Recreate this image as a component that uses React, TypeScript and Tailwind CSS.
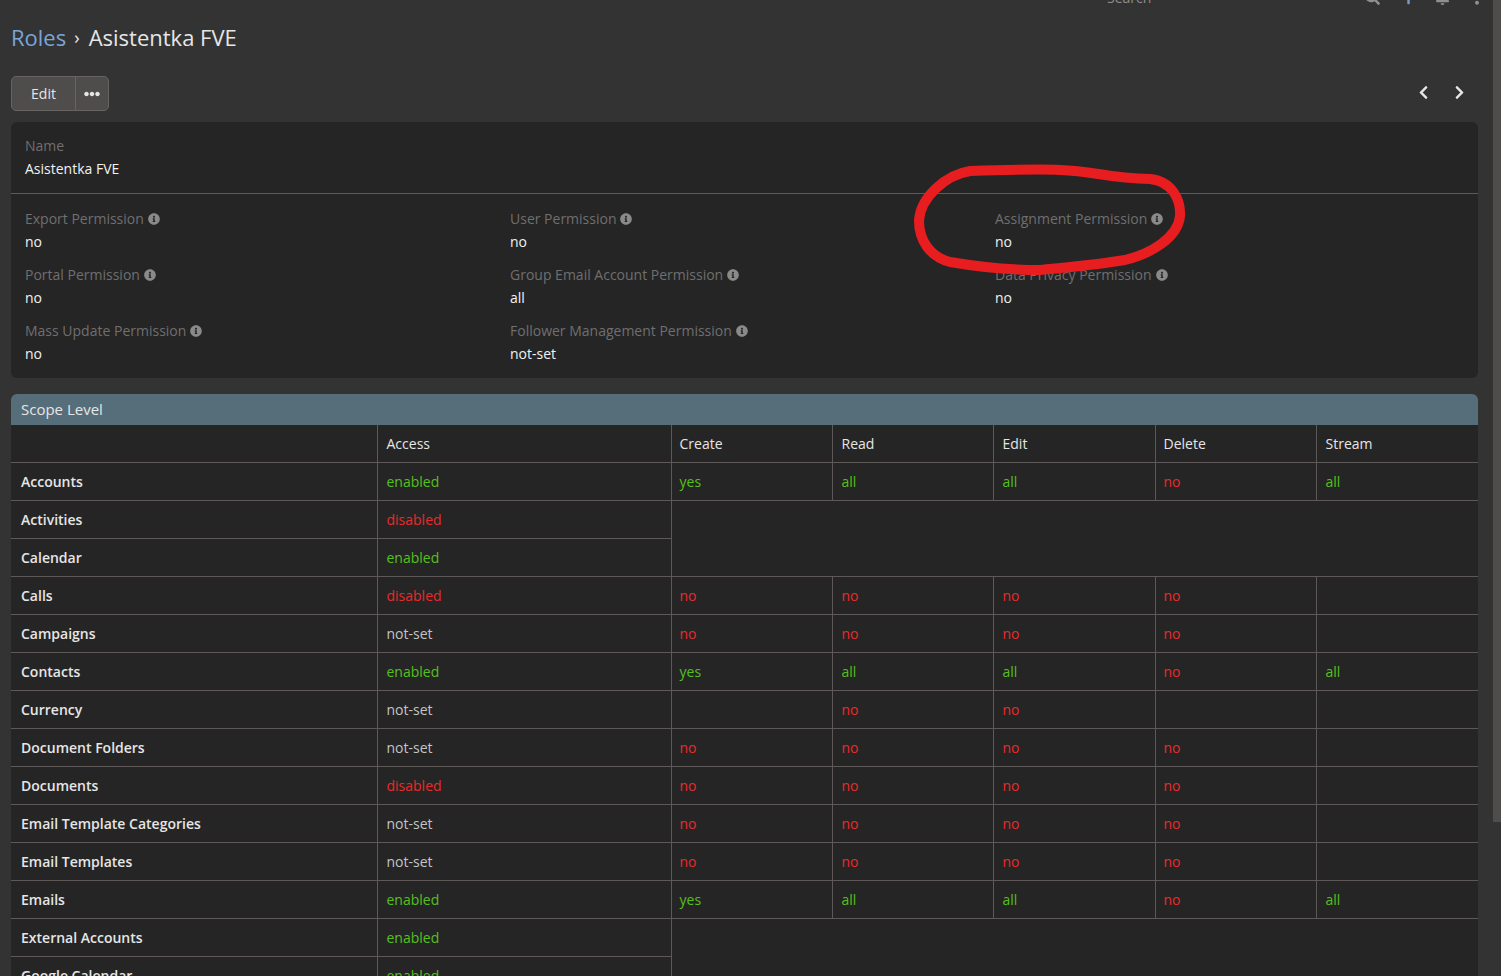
import React from "react";
import { FaInfoCircle, FaEllipsisH, FaChevronLeft, FaChevronRight, FaSearch, FaPlus, FaBell, FaEllipsisV } from "react-icons/fa";

type Cell = "" | "yes" | "no" | "all";

interface ScopeRow {
  name: string;
  access: "enabled" | "disabled" | "not-set";
  levels?: Cell[];
  merged?: number;
}

const scopes: ScopeRow[] = [
  { name: "Accounts", access: "enabled", levels: ["yes", "all", "all", "no", "all"] },
  { name: "Activities", access: "disabled", merged: 2 },
  { name: "Calendar", access: "enabled" },
  { name: "Calls", access: "disabled", levels: ["no", "no", "no", "no", ""] },
  { name: "Campaigns", access: "not-set", levels: ["no", "no", "no", "no", ""] },
  { name: "Contacts", access: "enabled", levels: ["yes", "all", "all", "no", "all"] },
  { name: "Currency", access: "not-set", levels: ["", "no", "no", "", ""] },
  { name: "Document Folders", access: "not-set", levels: ["no", "no", "no", "no", ""] },
  { name: "Documents", access: "disabled", levels: ["no", "no", "no", "no", ""] },
  { name: "Email Template Categories", access: "not-set", levels: ["no", "no", "no", "no", ""] },
  { name: "Email Templates", access: "not-set", levels: ["no", "no", "no", "no", ""] },
  { name: "Emails", access: "enabled", levels: ["yes", "all", "all", "no", "all"] },
  { name: "External Accounts", access: "enabled", merged: 2 },
  { name: "Google Calendar", access: "enabled" },
];

const permissions = [
  { label: "Export Permission", value: "no" },
  { label: "User Permission", value: "no" },
  { label: "Assignment Permission", value: "no" },
  { label: "Portal Permission", value: "no" },
  { label: "Group Email Account Permission", value: "all" },
  { label: "Data Privacy Permission", value: "no" },
  { label: "Mass Update Permission", value: "no" },
  { label: "Follower Management Permission", value: "not-set" },
];

// the Create and Delete columns sit a pixel tighter than the others
const levelPad = ["pl-[8px]", "pl-[9px]", "pl-[9px]", "pl-[8px]", "pl-[9px]"];

const tone = (v: string) => {
  if (v === "enabled" || v === "yes" || v === "all") return "text-[#55c01d]";
  if (v === "disabled" || v === "no") return "text-[#ea2a2a]";
  return "text-[#c4c4c4]";
};

const Field = ({ label, value, info }: { label: string; value: string; info?: boolean }) => (
  <div className="h-[56px]">
    <div className="flex h-[23px] items-center gap-[4px] text-[#6f6f6f]">
      {label}
      {info && <FaInfoCircle className="text-[12px] text-[#8a8a8a]" />}
    </div>
    <div className="flex h-[23px] items-center text-[#f2f2f2]">{value}</div>
  </div>
);

const App: React.FC = () => {
  return (
    <div className="relative flex h-screen overflow-hidden bg-[#333333] font-['Open_Sans',sans-serif] text-[14px]">
      <div className="w-[1493px] shrink-0">
        {/* navbar, scrolled almost out of view */}
        <div className="flex h-[5px] items-end overflow-hidden text-[#8f8f8f]">
          <span className="-mb-[3px] ml-[1107px] leading-[20px]">Search</span>
          <FaSearch className="ml-[214px] shrink-0 text-[15px]" />
          <FaPlus className="ml-[22px] shrink-0 text-[13px] text-[#7a9cc4]" />
          <FaBell className="ml-[20px] shrink-0 text-[15px]" />
          <FaEllipsisV className="ml-[20px] shrink-0 text-[14px]" />
        </div>

        <div className="pl-[11px] pr-[15px]">
          <h1 className="mt-[16px] flex h-[32px] items-center text-[22px] text-[#e6e6e6]">
            <span className="text-[#7aa5d8]">Roles</span>
            <span className="ml-[8px] mr-[9px] text-[18px]">›</span>
            <span>Asistentka FVE</span>
          </h1>

          <div className="mt-[23px] flex h-[35px] items-center justify-between">
            <div className="flex h-[35px] overflow-hidden rounded-[5px] border border-[#676363] bg-[#4f4c4c] text-[#e6e6e6]">
              <button className="w-[64px] border-r border-[#676363]">Edit</button>
              <button className="flex w-[32px] items-center justify-center">
                <FaEllipsisH className="text-[16px]" />
              </button>
            </div>
            <div className="mb-[2px] mr-[11px] flex items-center gap-[21px] text-[#e6e6e6]">
              <FaChevronLeft className="text-[15px]" />
              <FaChevronRight className="text-[15px]" />
            </div>
          </div>

          <div className="mt-[11px] h-[256px] rounded-[6px] bg-[#252525]">
            <div className="h-[72px] border-b border-[#5e5858] px-[14px] pt-[12px]">
              <Field label="Name" value="Asistentka FVE" />
            </div>
            <div className="grid grid-cols-[485px_485px_485px] px-[14px] pt-[13px]">
              {permissions.map((p) => (
                <Field key={p.label} label={p.label} value={p.value} info />
              ))}
            </div>
          </div>

          <div className="mt-[16px] flex h-[31px] items-center rounded-t-[6px] bg-[#566e7a] pl-[10px] text-[15px] text-[#e6e6e6]">
            Scope Level
          </div>
          <table className="w-[1467px] table-fixed border-collapse bg-[#252525] text-left text-[#e6e6e6]">
            <colgroup>
              <col className="w-[366px]" />
              <col className="w-[294px]" />
              <col className="w-[161px]" />
              <col className="w-[161px]" />
              <col className="w-[162px]" />
              <col className="w-[161px]" />
              <col className="w-[162px]" />
            </colgroup>
            <thead>
              <tr className="h-[37px] border-b border-[#5e5858]">
                <th className="pl-[10px]" />
                <th className="border-l border-[#5e5858] pl-[9px] font-normal">Access</th>
                {["Create", "Read", "Edit", "Delete", "Stream"].map((h, i) => (
                  <th key={h} className={`border-l border-[#5e5858] font-normal ${levelPad[i]}`}>
                    {h}
                  </th>
                ))}
              </tr>
            </thead>
            <tbody>
              {scopes.map((row) => (
                <tr key={row.name} className="h-[38px] border-b border-[#5e5858]">
                  <td className="pl-[10px] font-semibold">{row.name}</td>
                  <td className={`border-x border-[#5e5858] pl-[9px] ${tone(row.access)}`}>{row.access}</td>
                  {row.merged && <td colSpan={5} rowSpan={row.merged} className="bg-[#252525]" />}
                  {row.levels?.map((v, i) => (
                    <td key={i} className={`border-l border-[#5e5858] ${levelPad[i]} ${tone(v)}`}>
                      {v}
                    </td>
                  ))}
                </tr>
              ))}
            </tbody>
          </table>
        </div>
      </div>

      {/* scrollbar */}
      <div className="h-[822px] w-[8px] bg-[#4f4c4c]" />

      {/* hand drawn annotation */}
      <svg className="pointer-events-none absolute left-0 top-0" width="1501" height="976" fill="none">
        <path
          d="M970 171 C1000 170 1040 169 1060 170 C1095 171 1105 178 1150 179 C1172 181 1181 200 1180 216 C1178 238 1150 254 1125 260 C1095 265 1070 267 1040 270 C1015 270 985 268 950 262 C930 257 919 240 919 221 C920 198 945 175 970 171 Z"
          stroke="#e71d1f"
          strokeWidth="10"
        />
      </svg>
    </div>
  );
};

export default App;
